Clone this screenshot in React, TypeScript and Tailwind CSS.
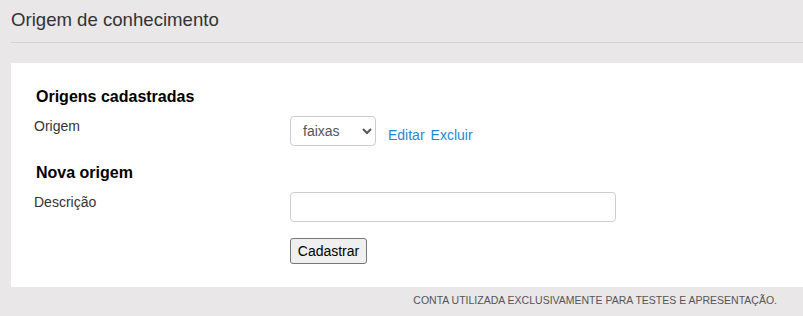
import React from 'react';

export default function App() {
  return (
    <div className="h-[316px] w-[803px] bg-[#e9e7e7] pl-[11px] font-['Liberation_Sans',Arial,sans-serif] text-[#333]">
      {/* Page header */}
      <div className="flex h-[43px] items-center border-b border-[#d4d3d3] pb-[2px]">
        <h1 className="text-[18.6px] leading-[22px] text-[#333]">Origem de conhecimento</h1>
      </div>

      {/* Form panel */}
      <div className="mt-[20px] h-[224px] bg-white pl-[23px] pt-[24px]">
        <h2 className="ml-[2px] text-[16px] font-bold leading-[20px] text-black">Origens cadastradas</h2>

        <div className="mt-[9px] flex items-start">
          <label className="w-[256px] text-[14px] leading-[20px] text-[#333]">Origem</label>
          <select
            defaultValue="faixas"
            className="h-[30px] w-[86px] rounded-[4px] border border-[#cccccc] bg-white pl-[8px] text-[14px] text-[#555]"
          >
            <option value="faixas">faixas</option>
          </select>
          <div className="ml-[12px] mt-[9px] flex gap-[6px] text-[14px] leading-[20px] text-[#1b8ad6]">
            <a href="#">Editar</a>
            <a href="#">Excluir</a>
          </div>
        </div>

        <h2 className="ml-[2px] mt-[17px] text-[16px] font-bold leading-[20px] text-black">Nova origem</h2>

        <div className="mt-[9px] flex items-start">
          <label className="w-[256px] text-[14px] leading-[20px] text-[#333]">Descrição</label>
          <input
            type="text"
            className="h-[30px] w-[326px] rounded-[4px] border border-[#cccccc] bg-white px-2 text-[14px]"
          />
        </div>

        <div className="mt-[16px] pl-[256px]">
          <button className="h-[26px] w-[77px] rounded-[3px] border border-[#767676] bg-[#efefef] text-[14px] text-black">
            Cadastrar
          </button>
        </div>
      </div>

      {/* Footer */}
      <div className="flex h-[27px] items-center justify-end pr-[26px] pt-[1px]">
        <span className="text-[10.5px] uppercase text-[#555]">Conta utilizada exclusivamente para testes e apresentação.</span>
      </div>
    </div>
  );
}
